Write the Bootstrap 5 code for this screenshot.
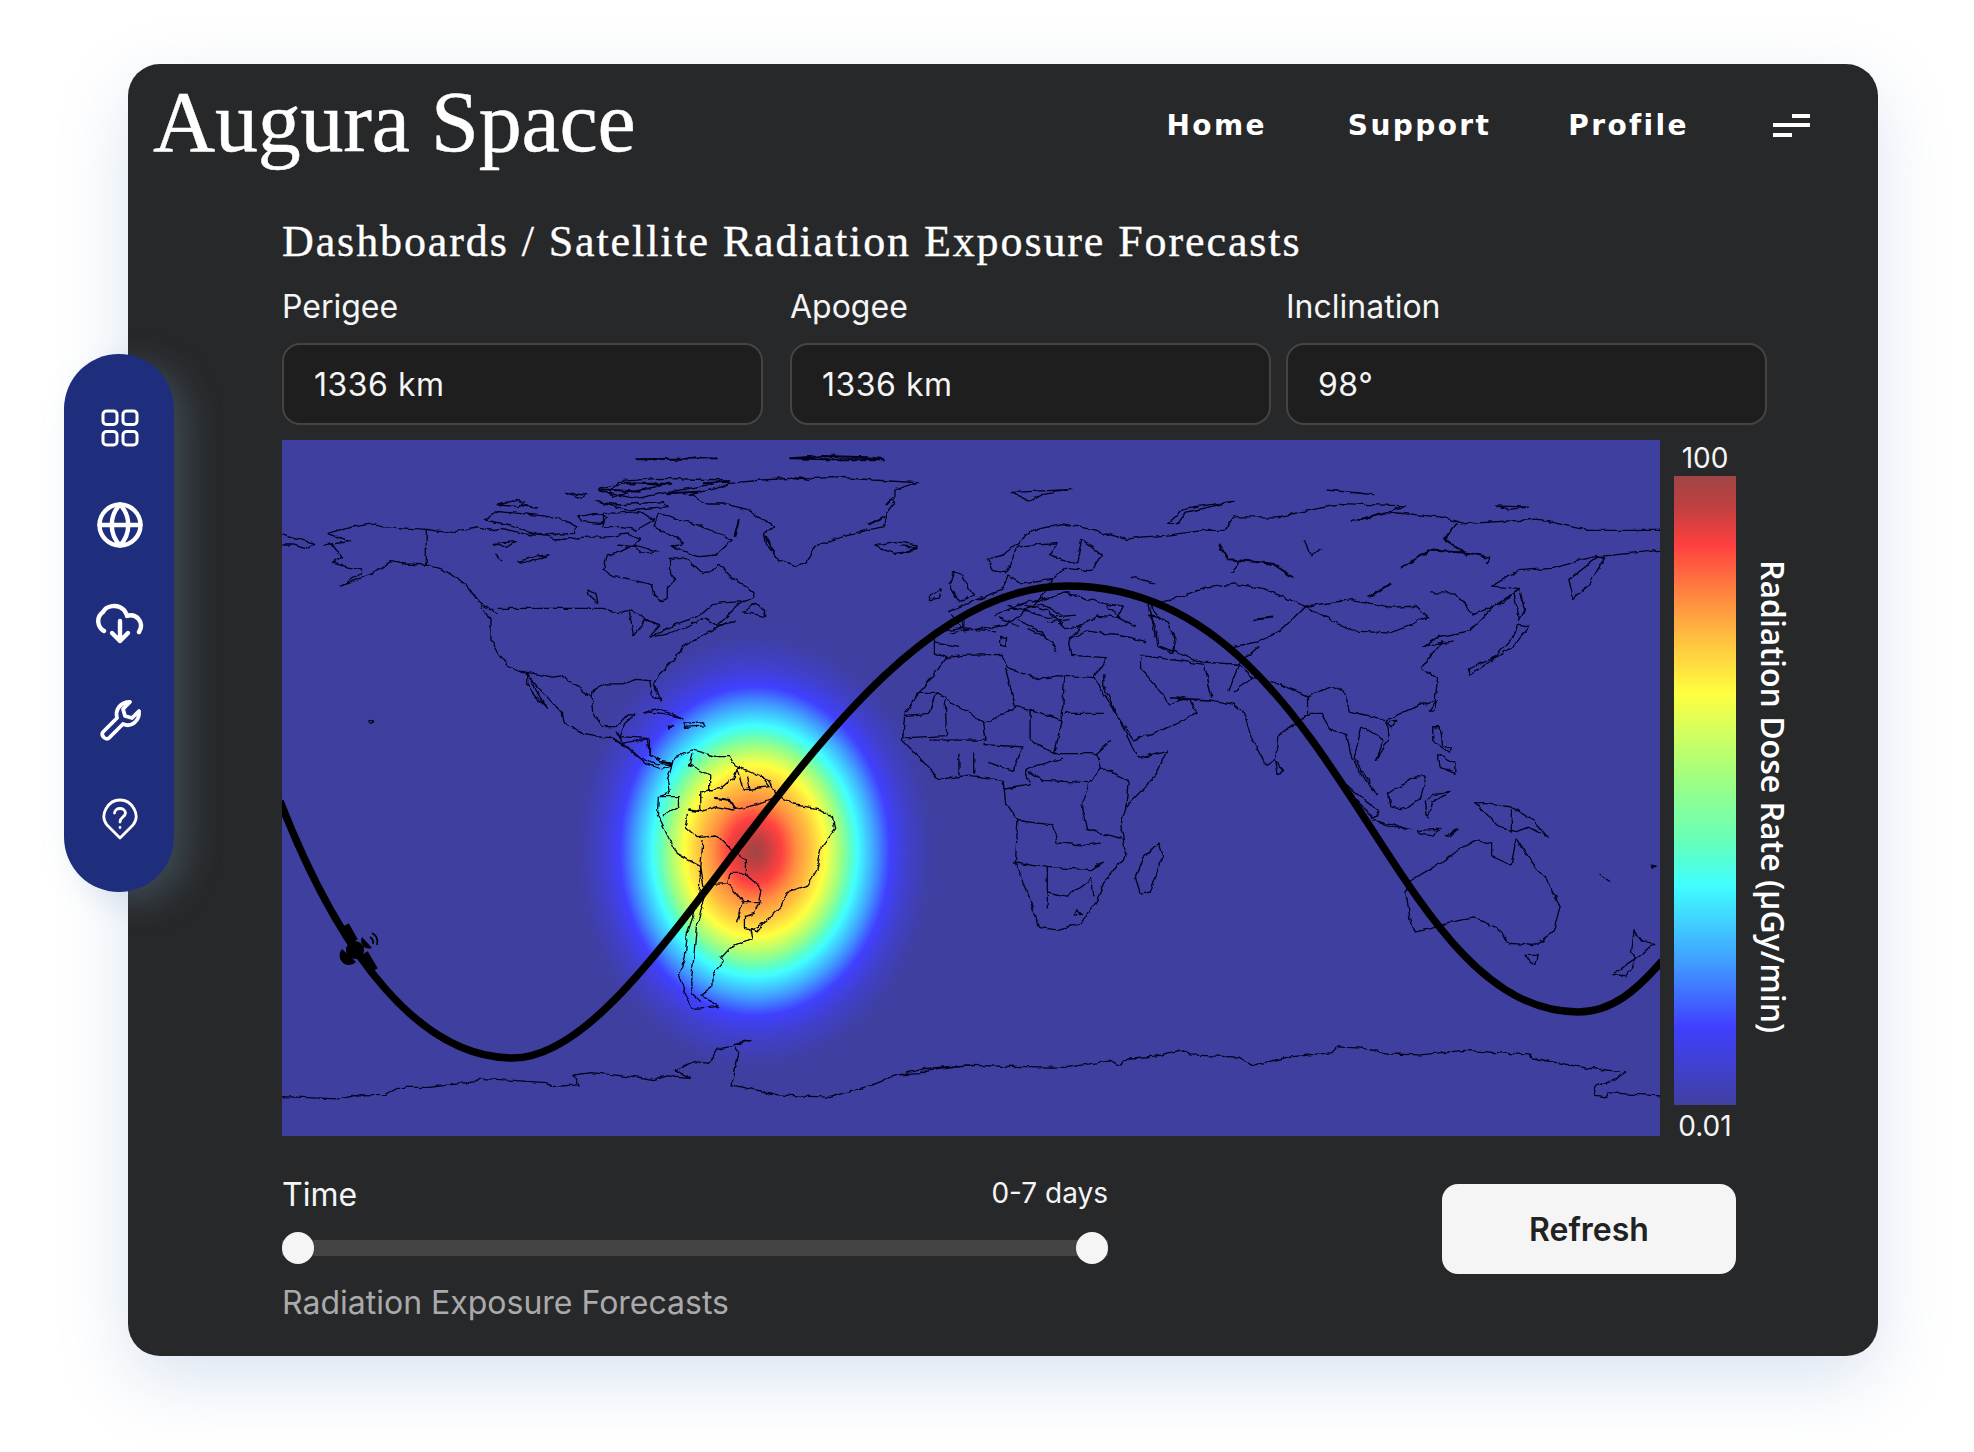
<!DOCTYPE html>
<html lang="en">
<head>
    <meta charset="UTF-8">
    <meta name="viewport" content="width=device-width, initial-scale=1.0">
    <title>Augura Space</title>
    <link href="https://cdn.jsdelivr.net/npm/bootstrap@5.3.0/dist/css/bootstrap.min.css" rel="stylesheet">
    <style>
        body { background: #fff; font-family: 'Inter', 'Liberation Sans', sans-serif; color: #f5f5f5; height: 1452px; overflow: hidden; }
        .app-shell { position: relative; width: 1974px; height: 1452px; padding: 64px 96px 0 128px; }
        .app-card { width: 1750px; height: 1292px; background: #27282a; border-radius: 32px; box-shadow: 0 24px 70px rgba(90, 130, 190, .22); }
        .app-head { height: 124px; padding: 0 68px 0 25px; }
        .logo-text { font-family: 'Liberation Serif', serif; font-size: 86px; line-height: 1; letter-spacing: -.2px; color: #fff; margin-top: -9px; -webkit-text-stroke: .5px #fff; }
        .main-link { font-family: 'DejaVu Sans', sans-serif; font-weight: 700; font-size: 28px; letter-spacing: 2.4px; color: #fff; text-decoration: none; line-height: 1; }
        .link-support { margin-left: 81px; }
        .link-profile { margin-left: 77px; }
        .burger { width: 37px; height: 24px; margin-left: 84px; }
        .burger i { display: block; height: 4px; background: #fff; }
        .burger i:nth-child(1) { width: 18px; margin-left: 19px; }
        .burger i:nth-child(2) { width: 37px; margin-top: 5px; }
        .burger i:nth-child(3) { width: 19px; margin-top: 6px; }
        .content-col { margin-left: 154px; width: 1485px; }
        .page-title { font-family: 'Liberation Serif', serif; font-size: 44px; line-height: 50px; letter-spacing: 1.9px; color: #fff; margin: 29px 0 20px; font-weight: 400; -webkit-text-stroke: .35px #fff; }
        .field-box { width: 481px; }
        .field-gap { margin-right: 27px; }
        .field-gap-end { margin-right: 15px; }
        .field-label { font-size: 32px; line-height: 40px; margin-bottom: 16px; color: #f5f5f5; font-weight: 400; }
        .field-input.form-control { height: 82px; background: #1e1e1e; border: 2px solid #444; border-radius: 18px; color: #f5f5f5; font-size: 32px; letter-spacing: .5px; padding: 2px 30px 0; display: flex; align-items: center; }
        .map-row { margin-top: 15px; height: 696px; }
        .map-pic { width: 1378px; height: 696px; display: block; background: #3f3f9f; flex: none; }
        .coast path { fill: none; stroke: #05051c; stroke-width: 1.3px; vector-effect: non-scaling-stroke; stroke-linejoin: round; }
        .coast path.coast-heavy { stroke-width: 2px; }
        .scale-col { width: 62px; margin-left: 14px; flex: none; }
        .scale-tick { font-size: 28px; line-height: 36px; text-align: center; color: #f5f5f5; white-space: nowrap; }
        .scale-tick-low { padding-top: 3px; }
        .scale-bar { height: 629px; background: linear-gradient(to bottom, #a04545 0%, #c04040 5%, #ff4040 11%, #ff9040 20%, #ffc040 26%, #ffff40 34.5%, #a0ff80 48%, #60ffc0 59%, #40ffff 65%, #40a0ff 77%, #4040ff 87.6%, #4040a0 100%); }
        .scale-name { writing-mode: vertical-rl; font-size: 32px; line-height: 34px; font-weight: 600; margin: 120px 0 0 20px; color: #fff; white-space: nowrap; font-family: 'Open Sans', sans-serif; }
        .time-col { width: 826px; margin-top: 39px; }
        .time-label { font-size: 32px; line-height: 40px; }
        .time-range { font-size: 28px; line-height: 36px; }
        .range-track { position: relative; height: 32px; margin-top: 17px; }
        .range-track::before { content: ""; position: absolute; left: 0; right: 0; top: 8px; height: 16px; background: #444; }
        .range-thumb { position: relative; width: 32px; height: 32px; border-radius: 50%; background: #f5f5f5; }
        .time-note { font-size: 32px; line-height: 40px; color: #aaa; margin-top: 19px; }
        .refresh-btn.btn { width: 294px; height: 90px; background: #f5f5f5; color: #222; border: 0; border-radius: 16px; font-size: 32px; font-weight: 600; padding-top: 8px; margin: 48px 31px 0 auto; }
        .side-rail { position: absolute; left: 64px; top: 354px; width: 110px; height: 538px; border-radius: 55px; background: #1f2d7d; box-shadow: 14px 10px 34px rgba(120, 160, 190, .28); padding: 55px 0 52px 2px; }
        .rail-icon { display: block; fill: none; stroke: #fff; stroke-linecap: round; stroke-linejoin: round; }
        .icon-grid { stroke-width: 3; }
        .icon-globe, .icon-cloud { stroke-width: 4.4; }
        .icon-tool { stroke-width: 3.8; }
        .icon-pin { stroke-width: 2.8; }
    </style>
</head>
<body>
<div class="app-shell">
    <div class="app-card">
        <!-- Top bar -->
        <header class="app-head d-flex align-items-center">
            <div class="logo-text">Augura Space</div>
            <nav class="d-flex align-items-center ms-auto">
                <a class="main-link" href="#">Home</a>
                <a class="main-link link-support" href="#">Support</a>
                <a class="main-link link-profile" href="#">Profile</a>
                <div class="burger"><i></i><i></i><i></i></div>
            </nav>
        </header>

        <div class="content-col">
            <h1 class="page-title">Dashboards / Satellite Radiation Exposure Forecasts</h1>

            <div class="d-flex">
                <div class="field-box field-gap">
                    <div class="field-label">Perigee</div>
                    <div class="form-control field-input">1336 km</div>
                </div>
                <div class="field-box field-gap-end">
                    <div class="field-label">Apogee</div>
                    <div class="form-control field-input">1336 km</div>
                </div>
                <div class="field-box">
                    <div class="field-label">Inclination</div>
                    <div class="form-control field-input">98°</div>
                </div>
            </div>

            <!-- Map + colour scale -->
            <div class="d-flex map-row">
                <svg class="map-pic" viewBox="0 0 1378 696" role="img" aria-label="World map with radiation forecast">
                    <defs>
                        <radialGradient id="heat" gradientUnits="userSpaceOnUse" cx="0" cy="0" r="232" gradientTransform="translate(473 411) scale(.82 1)">
                            <stop offset="0" stop-color="#a04545"/>
                            <stop offset=".06" stop-color="#c04040"/>
                            <stop offset=".14" stop-color="#ff4040"/>
                            <stop offset=".22" stop-color="#ff9040"/>
                            <stop offset=".29" stop-color="#ffc040"/>
                            <stop offset=".37" stop-color="#ffff40"/>
                            <stop offset=".45" stop-color="#a0ff80"/>
                            <stop offset=".5" stop-color="#60ffc0"/>
                            <stop offset=".54" stop-color="#40ffff"/>
                            <stop offset=".63" stop-color="#40a0ff"/>
                            <stop offset=".71" stop-color="#4040ff"/>
                            <stop offset=".8" stop-color="#4040cc"/>
                            <stop offset=".92" stop-color="#3f3fa4"/>
                            <stop offset="1" stop-color="#3f3f9f"/>
                        </radialGradient>
                        <filter id="rough" filterUnits="userSpaceOnUse" x="0" y="0" width="1378" height="696">
                            <feTurbulence type="fractalNoise" baseFrequency=".12" numOctaves="2" seed="4"/>
                            <feDisplacementMap in="SourceGraphic" scale="5" xChannelSelector="R" yChannelSelector="G"/>
                        </filter>
                    </defs>
                    <rect width="1378" height="696" fill="#3f3f9f"/>
                    <rect width="1378" height="696" fill="url(#heat)"/>

                    <g filter="url(#rough)">
                    <!-- Americas north of the isthmus -->
                    <g class="coast" transform="translate(-12 -10) scale(.4464 .3333)">
                        <path d="M130,310 180,290 220,280 250,290 350,298 400,308 440,298 465,290 490,300 520,295 570,312 620,318 640,330 700,322 760,320 800,312 830,328 815,345 785,365 755,378 748,415 765,440 800,445 855,465 860,495 880,512 890,505 890,475 907,450 895,420 895,385 925,382 950,405 968,428 990,425 1007,405 1030,440 1060,465 1082,485 1085,505 1060,515 995,520 962,558 905,585 852,622 890,612 940,585 975,565 1005,590 1045,570 1000,595 950,630 925,650 905,690 870,735 860,760 875,812 860,800 850,752 820,748 790,762 750,762 725,780 722,800 725,850 745,890 775,890 800,855 817,855 795,880 782,920 845,925 850,975 875,995 895,1000 900,1005 875,1017 840,1000 800,955 770,925 700,910 660,880 655,850 620,800 575,735 565,725 530,705 510,670 495,630 495,570 470,520 440,465 390,420 350,405 305,402 270,395 230,430 160,468 205,430 205,420 140,400 160,380 140,345 120,345 180,335Z"/>
                        <path d="M350,298V405M510,535H745L780,548 810,540 840,565 870,590M805,545 815,620 830,590 840,570 875,585 850,620M1000,590 1060,510M565,725 630,740 650,735 680,765 722,800M575,730 600,790 620,835 590,790 575,760Z"/>
                        <path d="M940,195 1000,175 1030,160 1100,150 1170,145 1260,140 1350,150 1450,158 1400,180 1400,215 1380,250 1375,290 1290,315 1220,350 1200,400 1180,408 1140,390 1110,340 1105,310 1130,290 1090,260 1075,240 1020,222 980,222Z"/>
                        <path d="M870,250 960,285 1035,330 1000,375 960,380 900,350 930,340 860,290ZM480,270 510,245 560,250 640,262 690,290 680,310 600,315 540,285ZM510,225 540,210 570,215 560,230ZM660,190 710,195 700,205ZM690,260 730,250 755,265 740,280 700,275ZM745,250 790,248 830,245 860,270 820,300 790,290 745,290ZM730,215 780,225 880,215 890,230 800,240ZM735,175 790,160 900,160 830,180 770,200ZM780,155 870,145 1030,150 980,165 900,185 820,205 760,190ZM500,340 550,335 530,352ZM555,395 600,378 625,375 580,398ZM505,375 520,390M780,345 815,350M815,345 870,365 830,370Z"/>
                        <path d="M1355,345 1400,335 1450,345 1445,360 1400,370 1365,355ZM28,312 70,330 100,340 80,355 50,345 28,345M222,868 232,876 223,882ZM835,845 870,835 900,850 925,870 890,852ZM930,880 970,875 975,888 930,892ZM892,888 905,890 895,894ZM1060,545 1090,520 1108,545 1108,560 1080,550ZM465,515 510,550M712,480 730,490 735,518 715,495Z"/>
                        <path class="coast-heavy" d="M820,88 1000,85M1165,85 1240,78 1340,82 1375,88 1250,88ZM1170,145 1210,150M800,160 900,165M740,178 830,185M970,160 1030,155M890,190 960,185M560,225 600,235M1340,285 1375,260M1110,320 1130,370M1380,225 1395,205M1050,270 1040,320"/>
                    </g>

                    <!-- South America and west Antarctica -->
                    <g class="coast" transform="translate(-12 260) scale(.4464 .3333)">
                        <path d="M875,190 900,195 905,175 945,150 960,155 1000,170 1030,170 1040,195 1090,225 1120,240 1130,280 1175,315 1225,325 1260,350 1265,385 1235,440 1225,510 1205,555 1160,575 1145,620 1105,670 1075,690 1080,715 1030,745 1010,775 1015,785 990,825 990,860 965,885 1005,920 945,925 930,880 915,825 930,770 935,700 960,600 965,500 910,460 868,345 870,290 895,280 890,240 900,195"/>
                        <path d="M760,110 800,140 830,175 870,195 880,185 900,190M775,95 790,130 850,115 850,165 875,180"/>
                        <path d="M945,160 940,195 985,225 985,270 1010,265 1040,230 1050,195M1045,200 1060,270 1120,260 1100,225M1070,230 1075,265M870,290 915,290 915,320 880,345M935,330 965,335 1000,320 1040,330 1090,315 1130,295M965,335 965,275 985,270M935,345 930,380 955,410 1000,405 1030,445 1040,460M965,500 970,420M1040,455 1065,480 1065,520 1030,520 1025,548 990,550M1065,520 1090,550 1100,570 1095,605 1060,605 1025,548M1095,605 1085,640 1065,650 1065,685 1090,695 1110,665M1060,605 1045,670M965,500 975,590 955,680 950,760 945,830 945,880 965,905"/>
                        <path class="coast-heavy" d="M995,293 1030,300 1045,328M935,328 965,332"/>
                        <path d="M27,1190 155,1197 200,1185 260,1183 290,1162 355,1162 460,1145 470,1135 620,1148 630,1160 690,1155 680,1125 720,1118 790,1128 860,1142 890,1128 940,1132 905,1110 950,1085 985,1090 1000,1050 1075,1022 1040,1030 1050,1060 1035,1155 1140,1185 1255,1192 1350,1155 1400,1128 1470,1105 1568,1095"/>
                    </g>

                    <!-- Afro-Eurasia, Australia, east Antarctica -->
                    <g class="coast" transform="translate(618 10) scale(.491 .4464)">
                        <path d="M95,465 65,510 35,550 10,590 5,650 40,690 80,738 130,730 210,740 215,790 240,830 235,925 265,1010 285,1070 320,1075 370,1060 400,1010 420,960 460,910 450,840 460,800 520,730 543,675 490,690 475,670 445,600 415,545 395,510 335,505 290,515 220,490 205,458 130,460Z"/>
                        <path d="M395,510 420,465 350,460 345,425 380,405 470,420 500,430M360,400 400,370 450,375 420,350M505,370 540,380 560,420 555,455 525,440 520,395ZM415,500 415,530 445,600 475,650 550,620 605,590 590,560 575,555 550,570 515,520 490,490 490,465"/>
                        <path d="M550,555 630,560 680,570 700,590 715,640 745,705 765,690 770,640 810,610 835,590 860,590 880,630 910,640 920,690 960,760 970,770 925,690 940,620 985,650 970,695 995,650 990,605 1040,580 1090,560 1095,510 1060,490 1105,430 1065,440 1090,420 1160,405 1210,350 1250,320 1260,310 1205,305 1260,270 1330,265 1410,240 1548,225M1548,180 1400,180 1300,155 1150,165 1100,150 1000,140 920,160 1030,125 900,120 770,150 680,150 660,180 620,180 550,190 490,195 460,200 400,180 330,165 270,180 210,235 180,245 190,270 215,275 240,215 320,210 305,235 360,255 370,200 410,235 390,270 335,265 310,290 250,300 220,280 210,310 170,330 100,360 125,400 90,405 70,420 70,455 95,465"/>
                        <path d="M35,545H75L60,590 5,595M75,545 175,612 235,575 262,580 330,605 335,505M215,490 235,575M335,590H415M92,560 95,640 5,645M170,610 175,650 130,650 60,650M265,580 265,650 315,680M330,605 315,680 400,680 430,650M400,680 410,710 465,740 460,800M330,690 255,715 265,750 210,760M255,715 290,740 385,745 410,710M385,745 370,800 380,850 450,870M240,830 310,840 320,880 375,885 410,880M232,925 300,935 300,1025M300,935 390,940 415,920M300,990 340,1000 390,960 395,1000M120,680V730M150,680V725M170,660 250,665 230,720 180,700M360,1030 370,1040 355,1042Z"/>
                        <path d="M100,410 160,400 220,390 280,340 335,320 420,345 455,350 445,375 480,395M190,370 250,345 300,360 340,400 375,390 345,425M240,380 290,410 320,450M280,340 310,290M220,350 300,375 360,370M240,345 300,330M120,440 70,430M130,375 130,405M120,400 195,405M250,360 290,345 330,370M200,375 240,395M300,385 345,380M260,400 300,420"/>
                        <path d="M510,350 620,310 680,300 740,310 825,350 920,405 1000,410 1075,375 1050,350 1000,352 920,335 825,350 780,400 730,430 680,440M510,350 530,380M530,440 615,475 690,480 730,440M680,540 720,510 760,520 830,550 830,590M620,480 635,555M490,460 620,480M830,550 880,530 905,540 915,585 990,605M1095,435 1130,430M690,480 670,540M505,345 520,420M720,510 690,480"/>
                        <path class="coast-heavy" d="M650,210 670,245 760,255 800,285M1020,265 1080,225 1155,230 1200,240 1195,255M1155,235 1110,200 1135,165M955,332 1000,300M720,380 760,375"/>
                        <path d="M675,275 690,250M1165,370 1230,340 1250,320M825,205 835,235 860,222M1080,320 1130,320 1170,370M470,285 520,298"/>
                        <path d="M1160,505 1200,475 1250,440 1280,395 1260,390 1250,415 1210,465 1160,490ZM1080,585 1095,560 1090,585ZM990,610 1010,605 1000,620ZM1085,620 1100,620 1105,660 1125,670 1120,680 1085,650ZM1095,680 1130,700 1130,725 1100,710ZM995,770 1050,730 1072,730 1060,780 1030,805 1000,800ZM890,730 930,770 975,810 965,825 900,750ZM965,830 1040,850 1000,845ZM1085,770 1120,765 1085,790 1075,825 1070,790ZM1170,790 1195,790 1245,800 1290,830 1320,868 1280,845 1255,855 1220,845 1190,810ZM1245,805V855M1110,865 1135,850 1120,865ZM1055,852 1100,850 1085,865 1060,860Z"/>
                        <path d="M1040,965 1100,925 1130,900 1170,875 1205,880 1205,910 1245,930 1255,870 1285,920 1320,970 1345,1020 1330,1080 1290,1110 1240,1105 1215,1070 1170,1048 1110,1060 1090,1070 1050,1080 1040,1060 1030,990ZM1275,1130 1300,1130 1295,1152 1282,1148ZM1495,1075 1510,1100 1535,1105 1500,1140 1490,1125ZM1500,1140 1450,1175 1480,1178ZM525,880 535,910 510,990 490,995 480,960 495,915ZM765,695 780,720 770,725ZM60,325 85,310 80,332 60,335ZM100,300 110,272 125,280 150,325 120,340 110,320ZM545,165 580,130 680,115 580,140 565,165ZM225,95 350,88 290,100 265,115ZM205,420 217,422 215,442 205,440ZM1360,290 1420,240 1435,240 1405,300 1370,335ZM1250,320 1262,310 1272,360 1262,380ZM1215,125 1280,128 1240,133ZM870,90 965,100 925,95ZM1425,950 1447,968M1530,930 1540,932 1533,935ZM0,215 35,218 0,232"/>
                        <path d="M0,1400 40,1397 60,1388 130,1378 200,1380 340,1383 430,1368 445,1378 470,1362 520,1358 570,1345 590,1355 690,1360 720,1378 790,1360 880,1350 890,1337 940,1340 1000,1353 1060,1355 1150,1345 1280,1355 1290,1362 1400,1385 1478,1393 1460,1410 1415,1425 1415,1445 1440,1450 1445,1440 1548,1447"/>
                    </g>
                    </g>

                    <!-- Orbit track -->
                    <path d="M-2,361C60,520 140,618 231,618 380,618 550,146 785,146 1057,146 1103,572 1296,572 1330,572 1355,550 1380,521" fill="none" stroke="#000" stroke-width="7.5"/>

                    <!-- Satellite marker -->
                    <g fill="#000" stroke="none">
                        <path d="M62,486 71,502" stroke="#000" stroke-width="11"/>
                        <path d="M81,514 91,531" stroke="#000" stroke-width="11"/>
                        <circle cx="73" cy="510" r="9"/>
                        <path d="M60,509A8.5,8.5 0 0 0 74,522Z"/>
                        <path d="M80,497 90,508A8,8 0 0 1 80,497Z"/>
                        <path d="M83,505 76,512" stroke="#000" stroke-width="2"/>
                        <path d="M88,497Q92,500 91,504M90,493Q97,497 95,505" fill="none" stroke="#000" stroke-width="1.6"/>
                    </g>
                </svg>

                <div class="scale-col">
                    <div class="scale-tick">100</div>
                    <div class="scale-bar"></div>
                    <div class="scale-tick scale-tick-low">0.01</div>
                </div>
                <div class="scale-name">Radiation Dose Rate (μGy/min)</div>
            </div>

            <!-- Time controls -->
            <div class="d-flex">
                <div class="time-col">
                    <div class="d-flex justify-content-between align-items-start">
                        <span class="time-label">Time</span>
                        <span class="time-range">0-7 days</span>
                    </div>
                    <div class="range-track d-flex justify-content-between">
                        <div class="range-thumb"></div>
                        <div class="range-thumb"></div>
                    </div>
                    <div class="time-note">Radiation Exposure Forecasts</div>
                </div>
                <button class="btn refresh-btn" type="button">Refresh</button>
            </div>
        </div>
    </div>

    <!-- Floating left rail -->
    <aside class="side-rail d-flex flex-column align-items-center justify-content-between">
        <svg class="rail-icon icon-grid" width="38" height="38" viewBox="0 0 38 38">
            <rect x="2" y="2" width="14" height="13.5" rx="3.5"/><rect x="22" y="2" width="14" height="13.5" rx="3.5"/>
            <rect x="2" y="22.5" width="14" height="13.5" rx="3.5"/><rect x="22" y="22.5" width="14" height="13.5" rx="3.5"/>
        </svg>
        <svg class="rail-icon icon-globe" width="46" height="46" viewBox="0 0 46 46">
            <circle cx="23" cy="23" r="20.5"/><path d="M2.5,23H43.5M23,2.5C12,14 12,32 23,43.5 34,32 34,14 23,2.5Z"/>
        </svg>
        <svg class="rail-icon icon-cloud" width="50" height="42" viewBox="0 0 50 42">
            <path d="M9,28C2,24 1,14 8,9 11,3 22,0 29,7 31,10 32,12 32,13 41,10 50,19 44,29"/><path d="M25,18V38M17,30 25,38 33,30"/>
        </svg>
        <svg class="rail-icon icon-tool" width="44" height="44" viewBox="0 0 44 44">
            <path d="M5,33 19,19C17,11 22,3 32,3L25,10 27,17 34,19 41,12C42,22 33,29 25,25L11,39C8,42 2,36 5,33Z"/>
        </svg>
        <svg class="rail-icon icon-pin" width="36" height="42" viewBox="0 0 36 42">
            <path d="M18,40 5,27C-3,17 6,2 18,2 30,2 39,17 31,27Z"/>
            <path d="M12.5,15C13,9 23,9 23.5,15 23.5,19 18,19 18,24M18,29.5V29.6"/>
        </svg>
    </aside>
</div>
<script src="https://cdn.jsdelivr.net/npm/bootstrap@5.3.0/dist/js/bootstrap.bundle.min.js"></script>
</body>
</html>
